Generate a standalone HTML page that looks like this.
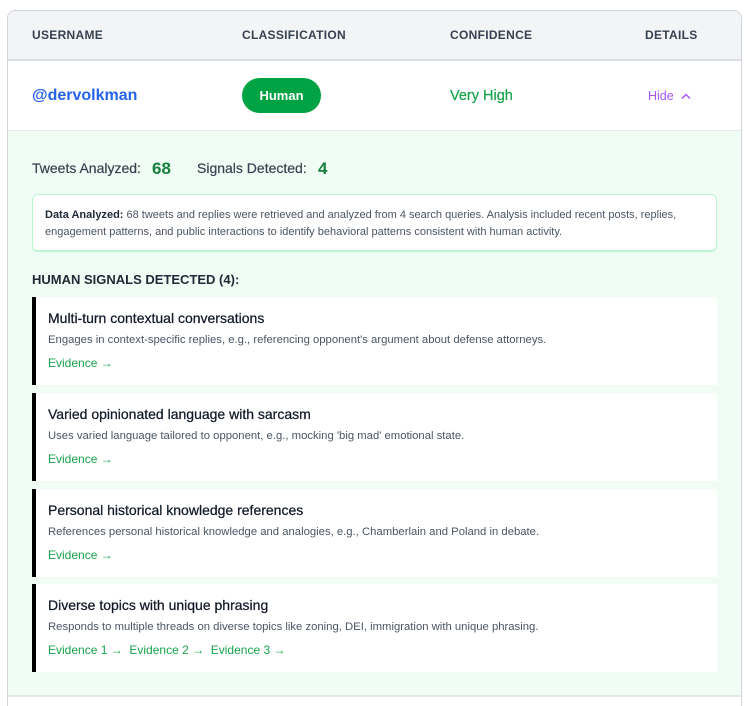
<!DOCTYPE html>
<html><head><meta charset="utf-8"><style>
*{box-sizing:border-box;margin:0;padding:0}
html,body{width:746px;height:706px;overflow:hidden}
body{background:#fff;font-family:"Liberation Sans",sans-serif;position:relative}
.box{position:absolute;left:7px;top:10px;width:735px;height:720px;border:1px solid #d1d5db;border-radius:8px;overflow:hidden}
.hdr{position:absolute;left:0;top:0;width:100%;height:50px;background:#f3f4f6;border-bottom:2px solid #d9dce1}
.h{position:absolute;top:17px;font-size:12px;font-weight:bold;color:#374151;letter-spacing:.3px}
.row{position:absolute;left:0;top:52px;width:100%;height:68px;background:#fff;border-bottom:1px solid #e5e7eb}
.panel{position:absolute;left:0;top:120px;width:100%;height:566px;background:#f0fdf4;border-bottom:2px solid #e5e7eb}
.a{position:absolute;white-space:nowrap}
.card{position:absolute;left:24px;width:685px;height:88px;background:#fff;border-left:4px solid #000}
.card .t{position:absolute;left:12px;top:13px;font-size:14px;color:#111827;-webkit-text-stroke:.25px #111827}
.card .d{position:absolute;left:12px;top:37px;font-size:11.3px;color:#4b5563}
.card .e{position:absolute;left:12px;top:59px;font-size:12px;color:#16a34a}
</style></head><body>
<div class="box">
 <div class="hdr">
  <div class="h" style="left:24px">USERNAME</div>
  <div class="h" style="left:234px">CLASSIFICATION</div>
  <div class="h" style="left:442px">CONFIDENCE</div>
  <div class="h" style="left:637px">DETAILS</div>
 </div>
 <div class="row">
  <div class="a" style="left:24px;top:24px;font-size:16px;font-weight:bold;color:#2563eb">@dervolkman</div>
  <div class="a" style="left:234px;top:15px;width:79px;height:35px;border-radius:18px;background:#00a344;color:#fff;font-size:13px;font-weight:bold;text-align:center;line-height:35px">Human</div>
  <div class="a" style="left:442px;top:25px;font-size:14.5px;color:#16a34a;-webkit-text-stroke:.2px #16a34a">Very High</div>
  <div class="a" style="left:640px;top:26px;font-size:12.5px;color:#a855f7">Hide <svg width="12" height="8" viewBox="0 0 12 8" style="margin-left:3px"><path d="M2 6.5L6 2.5L10 6.5" stroke="#a855f7" stroke-width="1.5" fill="none"/></svg></div>
 </div>
 <div class="panel">
  <div class="a" style="left:24px;top:29px;font-size:14px;color:#374151;-webkit-text-stroke:.2px #374151">Tweets Analyzed:</div>
  <div class="a" style="left:144px;top:28px;font-size:17px;font-weight:bold;color:#15803d">68</div>
  <div class="a" style="left:189px;top:29px;font-size:14px;color:#374151;-webkit-text-stroke:.2px #374151">Signals Detected:</div>
  <div class="a" style="left:310px;top:28px;font-size:17px;font-weight:bold;color:#15803d">4</div>
  <div class="a" style="left:24px;top:63px;width:685px;height:58px;background:#fff;border:1px solid #bbf7d0;border-bottom:2px solid #bbf7d0;border-radius:6px;padding:12px 12px;font-size:11px;line-height:17px;color:#4b5563;white-space:normal"><b style="color:#1f2937">Data Analyzed:</b> 68 tweets and replies were retrieved and analyzed from 4 search queries. Analysis included recent posts, replies, engagement patterns, and public interactions to identify behavioral patterns consistent with human activity.</div>
  <div class="a" style="left:24px;top:141px;font-size:13px;font-weight:bold;color:#1f2937">HUMAN SIGNALS DETECTED (4):</div>
  <div class="card" style="top:166px"><div class="t">Multi-turn contextual conversations</div><div class="d">Engages in context-specific replies, e.g., referencing opponent's argument about defense attorneys.</div><div class="e">Evidence →</div></div>
  <div class="card" style="top:262px"><div class="t">Varied opinionated language with sarcasm</div><div class="d">Uses varied language tailored to opponent, e.g., mocking 'big mad' emotional state.</div><div class="e">Evidence →</div></div>
  <div class="card" style="top:358px"><div class="t">Personal historical knowledge references</div><div class="d">References personal historical knowledge and analogies, e.g., Chamberlain and Poland in debate.</div><div class="e">Evidence →</div></div>
  <div class="card" style="top:453px"><div class="t">Diverse topics with unique phrasing</div><div class="d">Responds to multiple threads on diverse topics like zoning, DEI, immigration with unique phrasing.</div><div class="e">Evidence 1 → &nbsp;Evidence 2 → &nbsp;Evidence 3 →</div></div>
 </div>
</div>
</body></html>
